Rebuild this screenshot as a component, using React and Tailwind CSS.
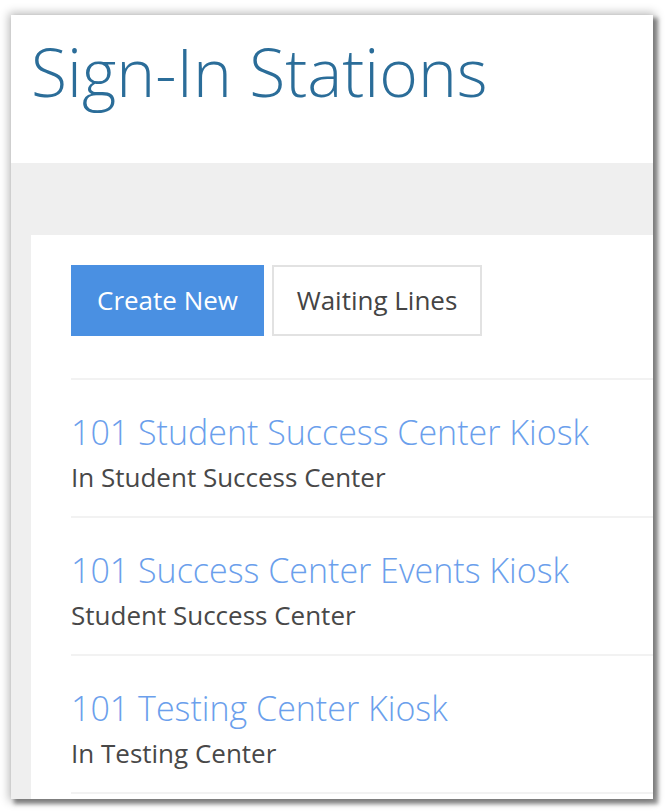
import React from 'react';

const stations = [
    { name: '101 Student Success Center Kiosk', location: 'In Student Success Center' },
    { name: '101 Success Center Events Kiosk', location: 'Student Success Center' },
    { name: '101 Testing Center Kiosk', location: 'In Testing Center' },
];

const App = () => {
    return (
        <div className="w-[665px] h-[812px] bg-white overflow-hidden pl-[11px] pt-[15px] font-['Open_Sans',sans-serif]">
            <div className="w-[642px] h-[784px] flex flex-col bg-white shadow-[4px_4px_4px_1px_rgba(0,0,0,0.4),0_0_9px_2px_rgba(0,0,0,0.28)]">
                {/* page header */}
                <div className="h-[148px] shrink-0 pl-[20px] pt-[16px]">
                    <h1 className="text-[66px] leading-[80px] font-light text-[#2b6d99]">
                        Sign-In Stations
                    </h1>
                </div>

                <div className="flex-1 flex flex-col bg-[#efefef] pl-[20px] pt-[72px] min-h-0">
                    <div className="flex-1 bg-white pl-[40px] pt-[30px] overflow-hidden">
                        <div className="flex gap-[8px]">
                            <button className="w-[193px] h-[71px] bg-[#4a90e2] text-white text-[26px]">
                                Create New
                            </button>
                            <button className="w-[210px] h-[71px] bg-white border-2 border-[#e2e2e2] text-[#444] text-[26px]">
                                Waiting Lines
                            </button>
                        </div>

                        <ul className="mt-[42px] border-t-2 border-[#f2f2f2]">
                            {stations.map((s) => (
                                <li key={s.name} className="h-[138px] border-b-2 border-[#f2f2f2] pt-[29px]">
                                    <a className="block text-[34px] leading-[46px] text-[#6b9fec] font-light">
                                        {s.name}
                                    </a>
                                    <p className="mt-[6px] text-[26px] leading-[32px] text-[#484848]">{s.location}</p>
                                </li>
                            ))}
                        </ul>
                    </div>
                </div>
            </div>
        </div>
    );
};

export default App;
